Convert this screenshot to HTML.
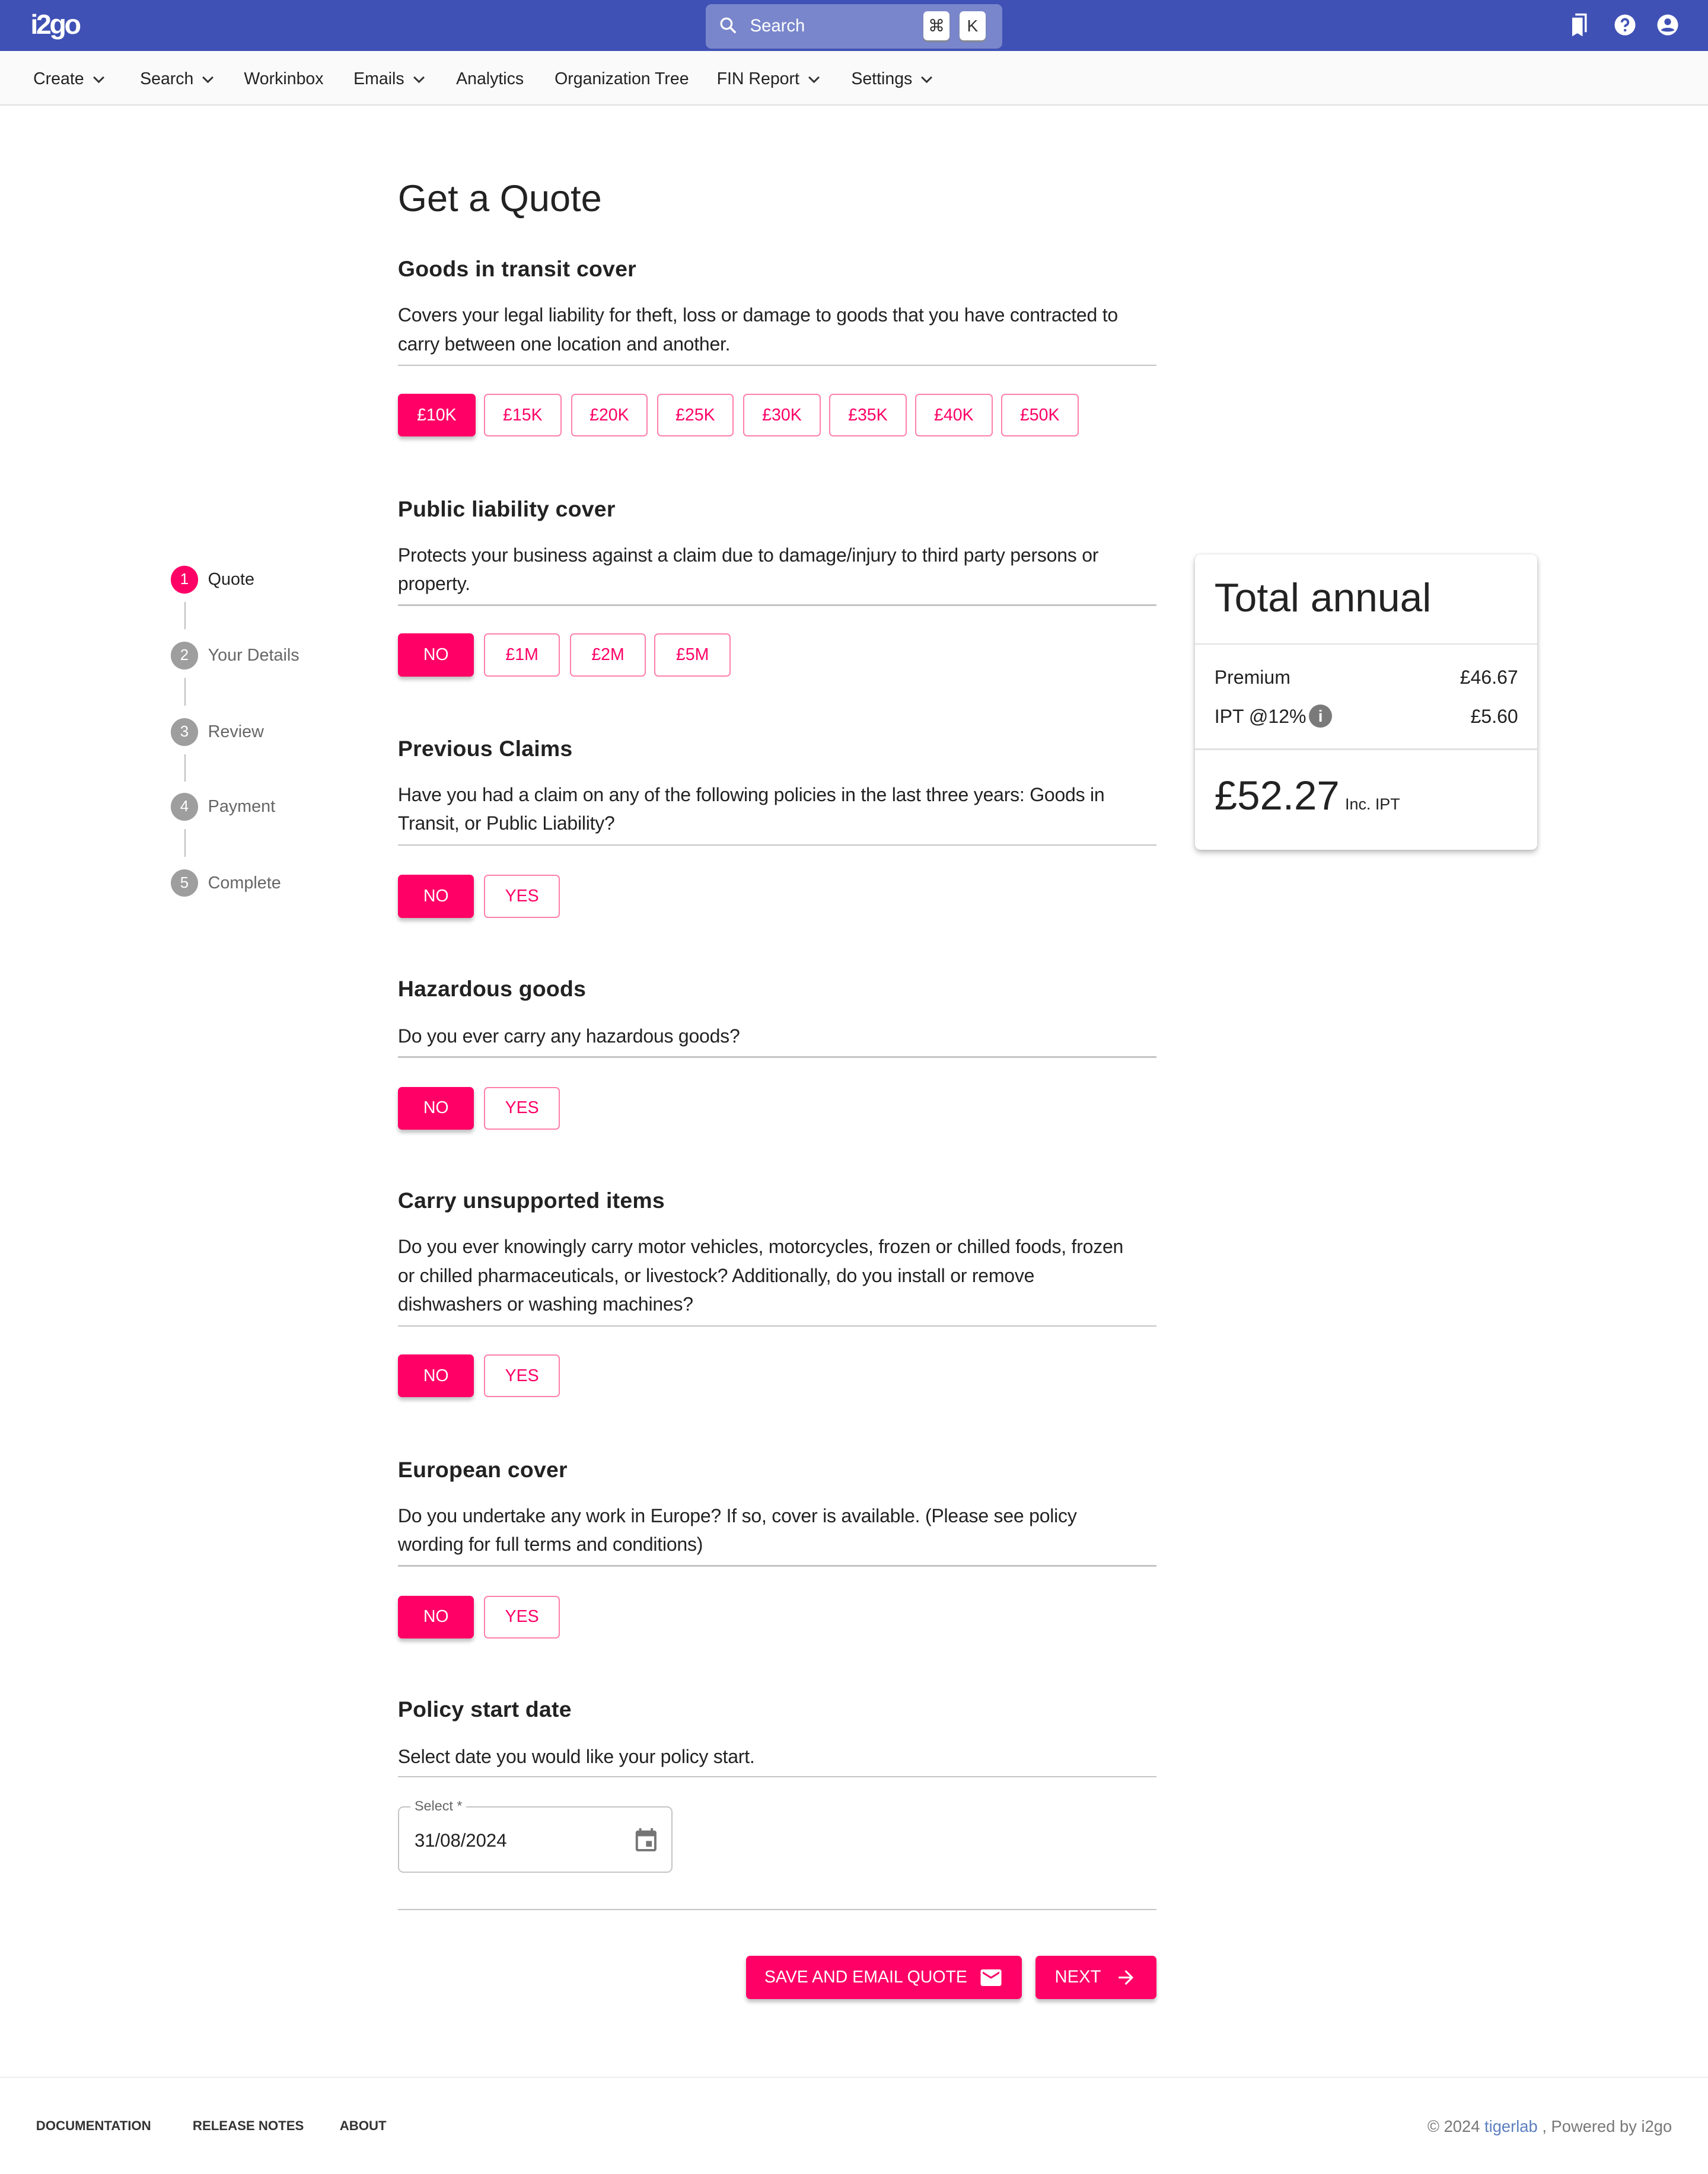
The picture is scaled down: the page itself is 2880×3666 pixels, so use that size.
<!DOCTYPE html>
<html><head><meta charset="utf-8"><style>
*{box-sizing:border-box;margin:0;padding:0}
html,body{width:2880px;height:3666px;overflow:hidden;background:#fff}
#r{zoom:2.337662;width:1232px;height:1568px;position:relative;font-family:"Liberation Sans",Arial,sans-serif;color:#212121}
.a{position:absolute}
.hd{left:0;top:0;width:1232px;height:37px;background:#3f51b5}
.nav{left:0;top:37px;width:1232px;height:39px;background:#fafafa;border-bottom:1px solid #e0e0e0}
.ni{top:50px;font-size:12.2px;color:#222;white-space:nowrap}
.ni svg{margin-left:6px;vertical-align:middle}
h2{position:absolute;left:287px;font-size:16px;font-weight:bold;color:#222;letter-spacing:.1px}
.d{position:absolute;left:287px;width:536px;font-size:13.7px;line-height:20.7px;color:#222;letter-spacing:-.1px}
.hr{position:absolute;left:287px;width:547px;height:1px;background:#c4c4c4}
.b{position:absolute;height:31px;border:1px solid #ff80ab;border-radius:3px;color:#ff0066;font-size:12.2px;display:flex;align-items:center;justify-content:center;background:#fff}
.b.on{background:#ff0066;color:#fff;border-color:#ff0066;box-shadow:0 2px 3px rgba(0,0,0,.25)}
.st{position:absolute;left:123px;width:20px;height:20px;border-radius:50%;background:#9e9e9e;color:#fff;font-size:11px;display:flex;align-items:center;justify-content:center}
.sl{position:absolute;left:150px;font-size:12.3px;color:#666}
.vl{position:absolute;left:133px;width:1px;height:20px;background:#bdbdbd}
.ft{top:1528px;font-size:9.5px;font-weight:bold;color:#333}
</style></head><body><div id="r">
<div class="a hd"></div>
<div class="a" style="left:22px;top:6px;color:#fff;font-weight:bold;font-size:20px;letter-spacing:-1.5px">i2go</div>
<div class="a" style="left:509px;top:3px;width:214px;height:32px;background:#7986cb;border-radius:4px"></div>
<svg class="a" style="left:518px;top:11px" width="15" height="15" viewBox="0 0 24 24"><circle cx="9.5" cy="9.5" r="6" fill="none" stroke="#fff" stroke-width="2.2"/><path d="M14 14l6 6" stroke="#fff" stroke-width="2.4"/></svg>
<div class="a" style="left:541px;top:12px;color:#fff;font-size:12.5px">Search</div>
<div class="a" style="left:666px;top:8px;width:19px;height:21px;background:#fff;border-radius:3px;box-shadow:0 1px 1px #888;font-size:12px;text-align:center;line-height:21px;color:#333">⌘</div>
<div class="a" style="left:692px;top:8px;width:19px;height:21px;background:#fff;border-radius:3px;box-shadow:0 1px 1px #888;font-size:12px;text-align:center;line-height:21px;color:#333">K</div>
<svg class="a" style="left:1131px;top:9px" width="18" height="18" viewBox="0 0 24 24"><path d="M4 5h10v18l-5-3-5 3z" fill="#fff"/><path d="M7 2h10v17" fill="none" stroke="#fff" stroke-width="2"/></svg>
<svg class="a" style="left:1163px;top:9px" width="18" height="18" viewBox="0 0 24 24"><circle cx="12" cy="12" r="10" fill="#fff"/><path d="M9 9.5a3 3 0 1 1 4 2.8c-.8.4-1 .9-1 1.7" fill="none" stroke="#3f51b5" stroke-width="2.2"/><rect x="11" y="16" width="2.2" height="2.2" fill="#3f51b5"/></svg>
<svg class="a" style="left:1194px;top:9px" width="18" height="18" viewBox="0 0 24 24"><circle cx="12" cy="12" r="10" fill="#fff"/><circle cx="12" cy="9" r="3.2" fill="#3f51b5"/><path d="M5.5 17c2-3 11-3 13 0c-2 2-11 2-13 0z" fill="#3f51b5"/></svg>
<div class="a nav"></div>
<div class="a ni" style="left:24px">Create<svg width="9" height="6" viewBox="0 0 10 6"><path d="M1 1l4 4 4-4" fill="none" stroke="#333" stroke-width="1.4"/></svg></div>
<div class="a ni" style="left:101px">Search<svg width="9" height="6" viewBox="0 0 10 6"><path d="M1 1l4 4 4-4" fill="none" stroke="#333" stroke-width="1.4"/></svg></div>
<div class="a ni" style="left:176px">Workinbox</div>
<div class="a ni" style="left:255px">Emails<svg width="9" height="6" viewBox="0 0 10 6"><path d="M1 1l4 4 4-4" fill="none" stroke="#333" stroke-width="1.4"/></svg></div>
<div class="a ni" style="left:329px">Analytics</div>
<div class="a ni" style="left:400px">Organization Tree</div>
<div class="a ni" style="left:517px">FIN Report<svg width="9" height="6" viewBox="0 0 10 6"><path d="M1 1l4 4 4-4" fill="none" stroke="#333" stroke-width="1.4"/></svg></div>
<div class="a ni" style="left:614px">Settings<svg width="9" height="6" viewBox="0 0 10 6"><path d="M1 1l4 4 4-4" fill="none" stroke="#333" stroke-width="1.4"/></svg></div>

<div class="a" style="left:287px;top:128px;font-size:27px;color:#222">Get a Quote</div>

<h2 style="top:185px">Goods in transit cover</h2>
<div class="d" style="top:217px">Covers your legal liability for theft, loss or damage to goods that you have contracted to carry between one location and another.</div>
<div class="hr" style="top:263px"></div>
<div class="b on" style="left:287px;top:284px;width:56px">£10K</div>
<div class="b" style="left:349px;top:284px;width:56px">£15K</div>
<div class="b" style="left:412px;top:284px;width:55px">£20K</div>
<div class="b" style="left:474px;top:284px;width:55px">£25K</div>
<div class="b" style="left:536px;top:284px;width:56px">£30K</div>
<div class="b" style="left:598px;top:284px;width:56px">£35K</div>
<div class="b" style="left:660px;top:284px;width:56px">£40K</div>
<div class="b" style="left:722px;top:284px;width:56px">£50K</div>

<h2 style="top:358px">Public liability cover</h2>
<div class="d" style="top:390px">Protects your business against a claim due to damage/injury to third party persons or property.</div>
<div class="hr" style="top:436px"></div>
<div class="b on" style="left:287px;top:457px;width:55px">NO</div>
<div class="b" style="left:349px;top:457px;width:55px">£1M</div>
<div class="b" style="left:411px;top:457px;width:55px">£2M</div>
<div class="b" style="left:472px;top:457px;width:55px">£5M</div>

<h2 style="top:531px">Previous Claims</h2>
<div class="d" style="top:563px">Have you had a claim on any of the following policies in the last three years: Goods in Transit, or Public Liability?</div>
<div class="hr" style="top:609px"></div>
<div class="b on" style="left:287px;top:631px;width:55px">NO</div>
<div class="b" style="left:349px;top:631px;width:55px">YES</div>

<h2 style="top:704px">Hazardous goods</h2>
<div class="d" style="top:737px">Do you ever carry any hazardous goods?</div>
<div class="hr" style="top:762px"></div>
<div class="b on" style="left:287px;top:784px;width:55px">NO</div>
<div class="b" style="left:349px;top:784px;width:55px">YES</div>

<h2 style="top:857px">Carry unsupported items</h2>
<div class="d" style="top:889px">Do you ever knowingly carry motor vehicles, motorcycles, frozen or chilled foods, frozen or chilled pharmaceuticals, or livestock? Additionally, do you install or remove dishwashers or washing machines?</div>
<div class="hr" style="top:956px"></div>
<div class="b on" style="left:287px;top:977px;width:55px">NO</div>
<div class="b" style="left:349px;top:977px;width:55px">YES</div>

<h2 style="top:1051px">European cover</h2>
<div class="d" style="top:1083px">Do you undertake any work in Europe? If so, cover is available. (Please see policy wording for full terms and conditions)</div>
<div class="hr" style="top:1129px"></div>
<div class="b on" style="left:287px;top:1151px;width:55px">NO</div>
<div class="b" style="left:349px;top:1151px;width:55px">YES</div>

<h2 style="top:1224px">Policy start date</h2>
<div class="d" style="top:1257px">Select date you would like your policy start.</div>
<div class="hr" style="top:1281px"></div>
<div class="a" style="left:287px;top:1303px;width:198px;height:48px;border:1px solid #c4c4c4;border-radius:4px"></div>
<div class="a" style="left:296px;top:1297px;background:#fff;padding:0 3px;font-size:10px;color:#666">Select *</div>
<div class="a" style="left:299px;top:1320px;font-size:13.3px;color:#222">31/08/2024</div>
<svg class="a" style="left:456px;top:1317px" width="20" height="20" viewBox="0 0 24 24"><path d="M19 4h-1V2h-2v2H8V2H6v2H5c-1.1 0-2 .9-2 2v14c0 1.1.9 2 2 2h14c1.1 0 2-.9 2-2V6c0-1.1-.9-2-2-2zm0 16H5V9h14v11zM12 13h5v5h-5z" fill="#757575"/></svg>
<div class="hr" style="top:1377px"></div>
<div class="b on" style="left:538px;top:1411px;width:199px;font-size:12.2px">SAVE AND EMAIL QUOTE<svg style="margin-left:8px" width="18" height="18" viewBox="0 0 24 24"><path d="M20 4H4c-1.1 0-2 .9-2 2v12c0 1.1.9 2 2 2h16c1.1 0 2-.9 2-2V6c0-1.1-.9-2-2-2zm0 4l-8 5-8-5V6l8 5 8-5v2z" fill="#fff"/></svg></div>
<div class="b on" style="left:747px;top:1411px;width:87px;font-size:12.5px">NEXT<svg style="margin-left:10px" width="16" height="16" viewBox="0 0 24 24"><path d="M12 4l-1.4 1.4 5.6 5.6H4v2h12.2l-5.6 5.6L12 20l8-8z" fill="#fff"/></svg></div>

<div class="st" style="top:408px;background:#ff0066">1</div><div class="sl" style="top:411px;color:#222">Quote</div>
<div class="vl" style="top:434px"></div>
<div class="st" style="top:463px">2</div><div class="sl" style="top:466px">Your Details</div>
<div class="vl" style="top:489px"></div>
<div class="st" style="top:518px">3</div><div class="sl" style="top:521px">Review</div>
<div class="vl" style="top:544px"></div>
<div class="st" style="top:572px">4</div><div class="sl" style="top:575px">Payment</div>
<div class="vl" style="top:598px"></div>
<div class="st" style="top:627px">5</div><div class="sl" style="top:630px">Complete</div>

<div class="a" style="left:862px;top:400px;width:247px;height:213px;background:#fff;border-radius:4px;box-shadow:0 2px 4px rgba(0,0,0,.25),0 0 2px rgba(0,0,0,.1)"></div>
<div class="a" style="left:876px;top:415px;font-size:29px;color:#222">Total annual</div>
<div class="a" style="left:862px;top:464px;width:247px;height:1px;background:#e0e0e0"></div>
<div class="a" style="left:876px;top:481px;font-size:13.7px">Premium</div>
<div class="a" style="left:1000px;width:95px;text-align:right;top:481px;font-size:13.7px">£46.67</div>
<div class="a" style="left:876px;top:509px;font-size:13.7px">IPT @12%</div>
<div class="a" style="left:944px;top:508px;width:17px;height:17px;border-radius:50%;background:#7a7a7a;color:#fff;font-size:12px;font-weight:bold;text-align:center;line-height:17px">i</div>
<div class="a" style="left:1000px;width:95px;text-align:right;top:509px;font-size:13.7px">£5.60</div>
<div class="a" style="left:862px;top:540px;width:247px;height:1px;background:#e0e0e0"></div>
<div class="a" style="left:876px;top:557px;font-size:29.5px;color:#222;white-space:nowrap">£52.27<span style="font-size:11.5px;margin-left:4px">Inc. IPT</span></div>

<div class="a" style="left:0;top:1498px;width:1232px;height:1px;background:#eee"></div>
<div class="a ft" style="left:26px">DOCUMENTATION</div>
<div class="a ft" style="left:139px">RELEASE NOTES</div>
<div class="a ft" style="left:245px">ABOUT</div>
<div class="a" style="left:900px;width:306px;text-align:right;top:1527px;font-size:11.7px;color:#777">© 2024 <span style="color:#5c7fbf">tigerlab</span> , Powered by i2go</div>
</div></body></html>
